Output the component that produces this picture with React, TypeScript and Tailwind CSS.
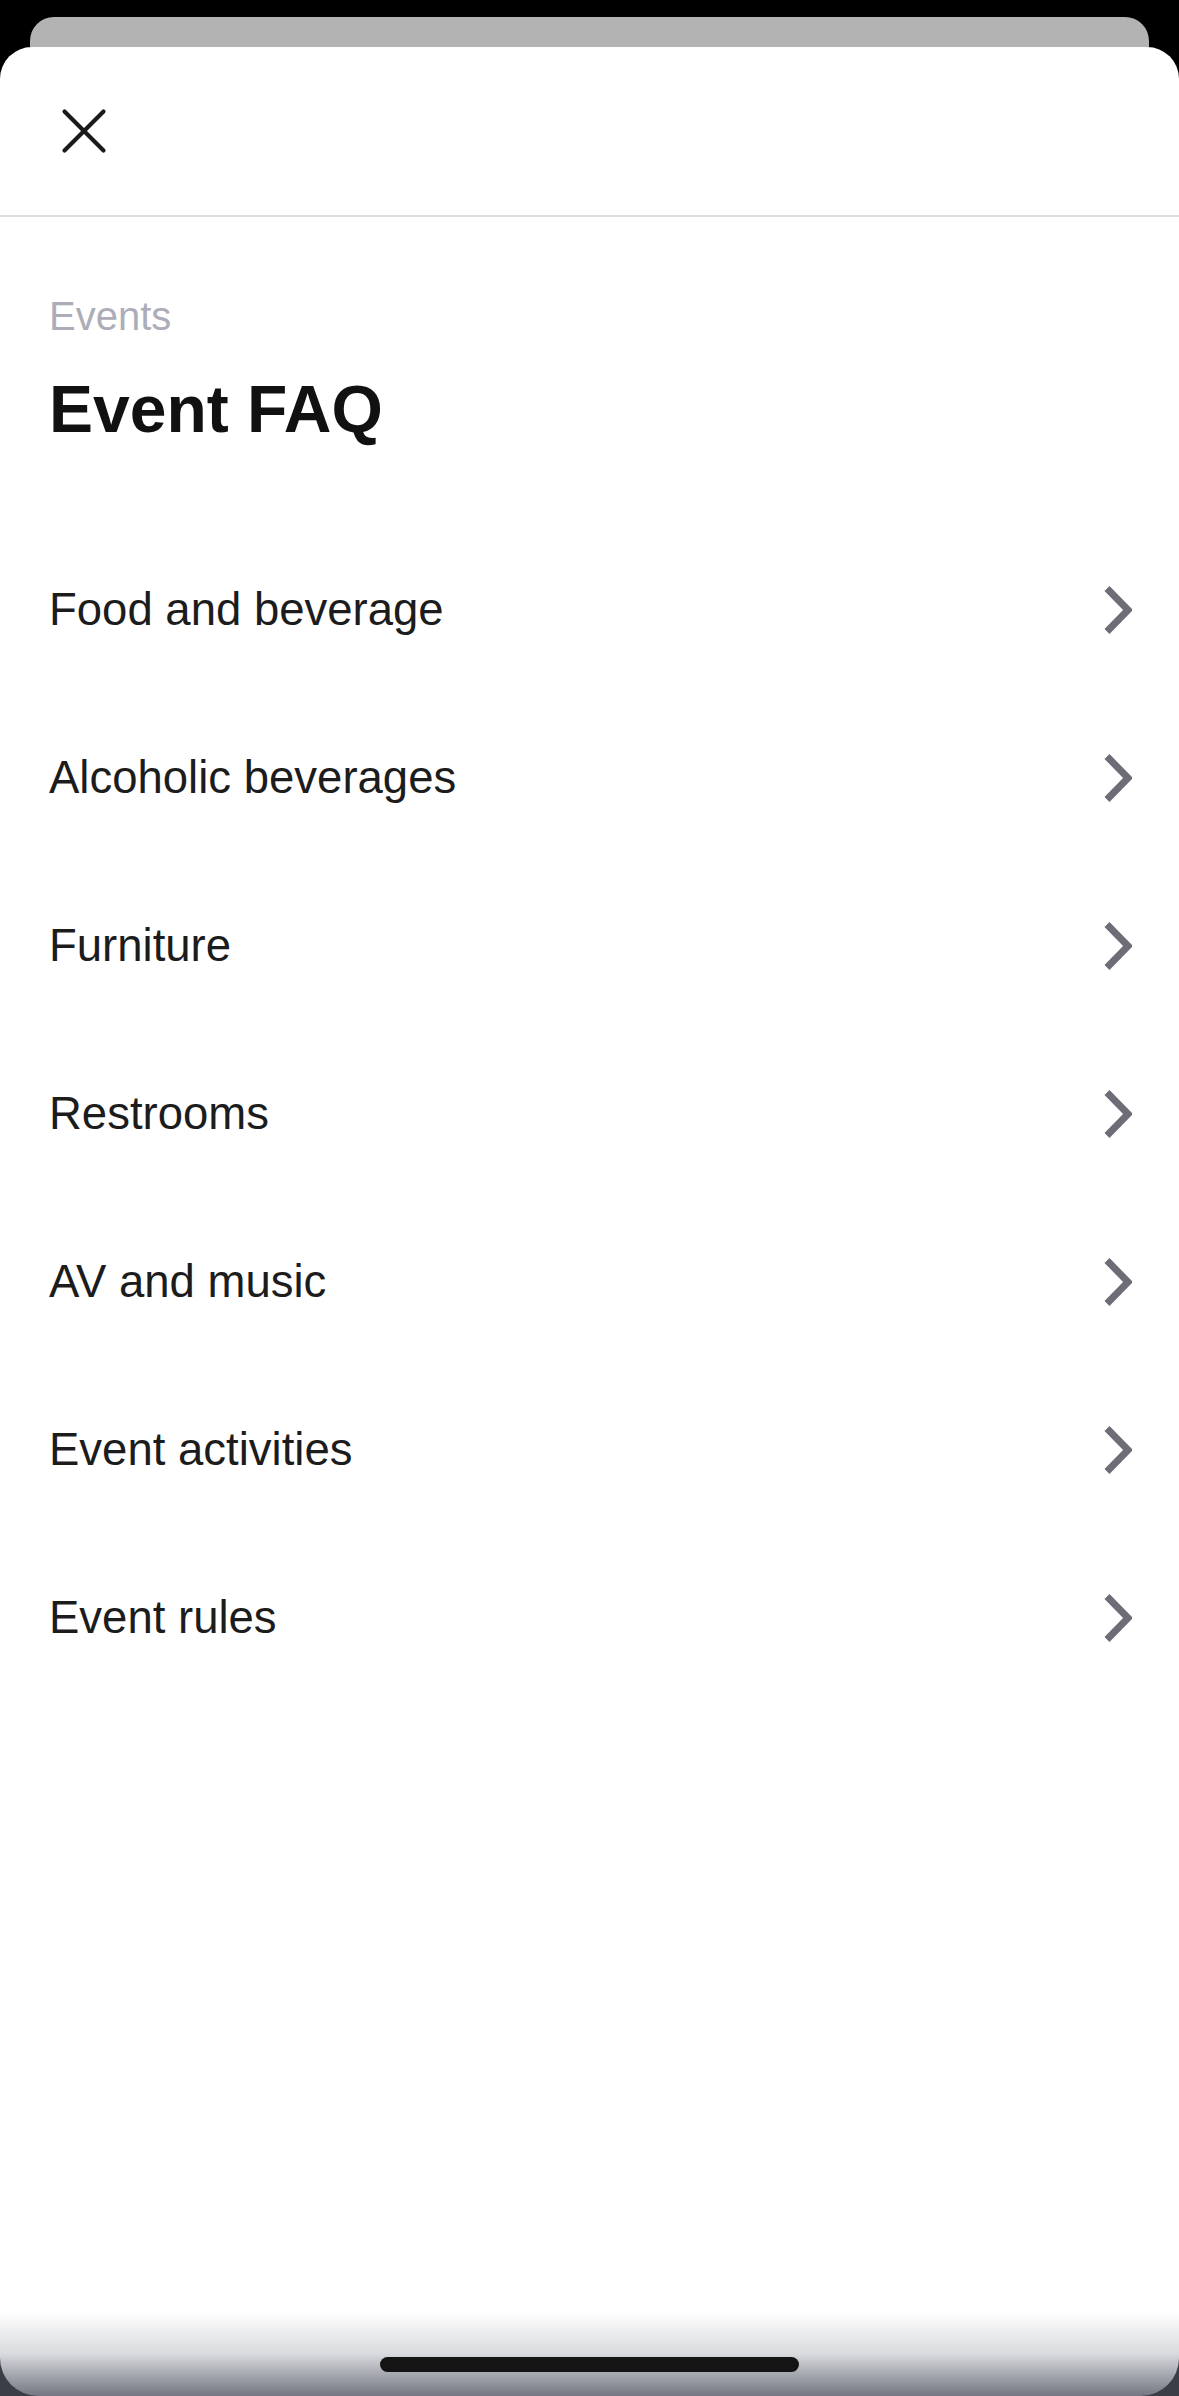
import React from 'react';

const topics = [
  'Food and beverage',
  'Alcoholic beverages',
  'Furniture',
  'Restrooms',
  'AV and music',
  'Event activities',
  'Event rules',
];

const CloseIcon = () => (
  <svg width="48" height="48" viewBox="0 0 48 48" fill="none">
    <path d="M4.5 4.5L43.5 43.5M43.5 4.5L4.5 43.5" stroke="#1a1a1a" strokeWidth="4.2" strokeLinecap="round" />
  </svg>
);

const Chevron = () => (
  <svg width="30" height="48" viewBox="0 0 30 48" fill="none" className="mr-[-2px]">
    <path d="M5 2.5L26 24L5 45.5" stroke="#6d6d77" strokeWidth="7" strokeLinejoin="miter" />
  </svg>
);

const App: React.FC = () => {
  return (
    <div
      className="w-[1179px] h-[2396px] bg-black flex flex-col overflow-hidden"
      style={{ fontFamily: '"Liberation Sans", Arial, sans-serif' }}
    >
      {/* Stacked sheet behind */}
      <div className="pt-[17px] px-[30px]">
        <div className="h-[30px] bg-[#b3b3b3] rounded-t-[24px]" />
      </div>

      {/* Main sheet */}
      <div className="flex-1 bg-white rounded-t-[32px] flex flex-col">
        <div className="h-[170px] border-b-2 border-[#dedede] flex items-center pl-[60px]">
          <CloseIcon />
        </div>

        <div className="px-[49px] pt-[76px]">
          <div className="text-[40px] leading-[47px] text-[#adadb9]">Events</div>
          <h1 className="mt-[30px] text-[66px] leading-[79px] font-bold text-[#111111]">
            Event FAQ
          </h1>

          <div className="mt-[77px] flex flex-col">
            {topics.map((t) => (
              <div key={t} className="h-[168px] flex items-center justify-between">
                <span className="text-[45.5px] leading-[54px] text-[#1c1c1c]">{t}</span>
                <Chevron />
              </div>
            ))}
          </div>
        </div>

        <div className="flex-1" />

        {/* Home indicator area */}
        <div className="bg-[#3b3d47]">
          <div className="h-[84px] rounded-b-[38px] bg-gradient-to-b from-white via-[#d8dadd] to-[#747682] flex justify-center pt-[45px]">
            <div className="w-[419px] h-[15px] rounded-full bg-[#141414]" />
          </div>
        </div>
      </div>
    </div>
  );
};

export default App;
